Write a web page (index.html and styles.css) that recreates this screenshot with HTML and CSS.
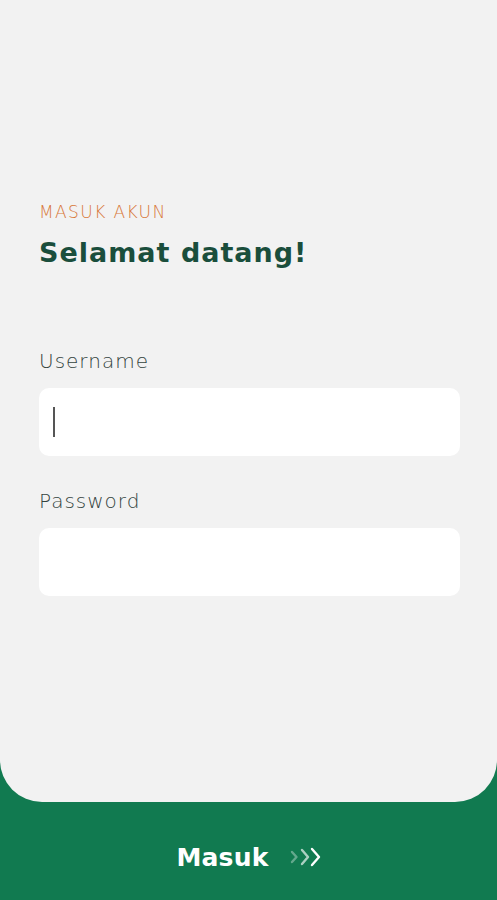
FILE: index.html
```html
<!DOCTYPE html>
<html lang="id">
<head>
  <meta charset="UTF-8" />
  <meta name="viewport" content="width=device-width, initial-scale=1.0" />
  <title>Masuk Akun</title>
  <link rel="stylesheet" href="styles.css">
</head>
<body>
  <div class="card">
    <p class="eyebrow">MASUK AKUN</p>
    <h1 class="title">Selamat datang!</h1>

    <div class="field">
      <label for="username">Username</label>
      <div class="input-box"><span class="caret"></span></div>
    </div>

    <div class="field">
      <label for="password">Password</label>
      <div class="input-box"></div>
    </div>
  </div>

  <div class="footer">
    <button class="btn-masuk">
      <span>Masuk</span>
      <svg width="34" height="22" viewBox="0 0 34 22" fill="none" stroke="#fff" stroke-width="2.4" stroke-linecap="round" stroke-linejoin="round">
        <polyline points="3,6 7.5,11 3,16" opacity="0.35" />
        <polyline points="13,4 19,11 13,18" opacity="0.65" />
        <polyline points="23,3 30,11 23,19" />
      </svg>
    </button>
  </div>
</body>
</html>
```

FILE: styles.css
```css
body {
  margin: 0;
  padding: 0;
  height: 900px;
  display: flex;
  flex-direction: column;
  background: #117a50;
  font-family: 'DejaVu Sans', 'Noto Sans', sans-serif;
  overflow: hidden;
}

.card {
  height: 802px;
  box-sizing: border-box;
  background: #f2f2f2;
  border-radius: 0 0 42px 42px;
  padding: 200px 37px 0 39px;
}

.eyebrow {
  margin: 0;
  color: #d8783a;
  font-size: 17px;
  font-weight: 300;
  letter-spacing: 1.4px;
  line-height: 24px;
}

.title {
  margin: 8px 0 0;
  color: #1a4e3c;
  font-size: 27px;
  font-weight: 700;
  letter-spacing: 1px;
  line-height: 42px;
}

.field {
  display: flex;
  flex-direction: column;
}

.field:first-of-type {
  margin-top: 74px;
}

.field + .field {
  margin-top: 32px;
}

.field label {
  color: #34443e;
  font-size: 20px;
  font-weight: 300;
  line-height: 26px;
  letter-spacing: 1px;
}

.input-box {
  margin-top: 14px;
  height: 68px;
  background: #fff;
  border-radius: 10px;
  display: flex;
  align-items: center;
  padding-left: 14px;
}

.caret {
  width: 2px;
  height: 30px;
  background: #555;
}

.footer {
  flex: 1;
  display: flex;
  justify-content: center;
  align-items: center;
  padding-top: 12px;
}

.btn-masuk {
  background: none;
  border: none;
  color: #fff;
  display: flex;
  align-items: center;
  gap: 20px;
  font-family: inherit;
  font-size: 25px;
  font-weight: 700;
  letter-spacing: 0.2px;
  padding: 0;
  margin-left: 2px;
  cursor: pointer;
}
```
